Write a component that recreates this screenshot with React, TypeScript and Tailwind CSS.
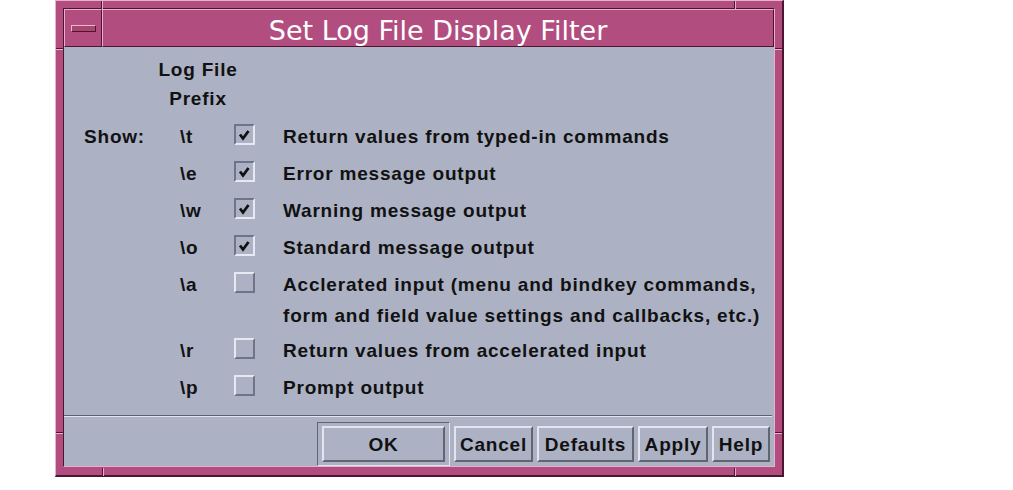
const rows = [
  { prefix: "\\t", on: true, lines: ["Return values from typed-in commands"] },
  { prefix: "\\e", on: true, lines: ["Error message output"] },
  { prefix: "\\w", on: true, lines: ["Warning message output"] },
  { prefix: "\\o", on: true, lines: ["Standard message output"] },
  {
    prefix: "\\a",
    on: false,
    lines: [
      "Acclerated input (menu and bindkey commands,",
      "form and field value settings and callbacks, etc.)",
    ],
  },
  { prefix: "\\r", on: false, lines: ["Return values from accelerated input"] },
  { prefix: "\\p", on: false, lines: ["Prompt output"] },
];

const text = "font-['Liberation_Sans',Arial,sans-serif] font-bold text-[19px] tracking-[0.8px] text-[#111111]";

function CheckBox({ on }: { on: boolean }) {
  return (
    <div
      className={
        "mt-[8px] w-[21px] h-[21px] shrink-0 border-2 flex items-center justify-center " +
        (on
          ? "border-t-[#70748a] border-l-[#70748a] border-b-[#e6e9f2] border-r-[#e6e9f2]"
          : "border-t-[#e6e9f2] border-l-[#e6e9f2] border-b-[#70748a] border-r-[#70748a]")
      }
    >
      {on && (
        <svg width="17" height="17" viewBox="0 0 17 17">
          <polyline points="4,8.5 7,12.5 12.5,5" fill="none" stroke="#111" strokeWidth="2.8" strokeLinejoin="miter" />
        </svg>
      )}
    </div>
  );
}

function Button({ label, w }: { label: string; w: string }) {
  return (
    <div
      className={
        "h-[36px] border-2 border-t-[#e2e5ef] border-l-[#e2e5ef] border-b-[#61656f] border-r-[#61656f] flex items-center justify-center pt-[2px] " +
        w
      }
    >
      <span className={text}>{label}</span>
    </div>
  );
}

// frame resize notches
function Notch({ pos, vertical }: { pos: string; vertical: boolean }) {
  return (
    <div
      className={
        "absolute " +
        pos +
        (vertical
          ? " w-[2px] h-[8px] border-l border-l-[#4d1530] border-r border-r-[#e8b0cc]"
          : " w-[7px] h-[2px] border-t border-t-[#4d1530] border-b border-b-[#e8b0cc]")
      }
    />
  );
}

export default function App() {
  return (
    <div className="w-[1013px] h-[490px] bg-white overflow-hidden">
      <div className="relative ml-[55px] w-[729px] bg-[#b24e7f] border border-t-[#e8b0cc] border-l-[#e8b0cc] border-r-2 border-b-2 border-r-[#4d1530] border-b-[#4d1530] pt-[7px] pl-[7px] pr-[7px] pb-[8px]">
        <Notch vertical pos="left-[45px] top-0" />
        <Notch vertical pos="left-[678px] top-0" />
        <Notch vertical pos="left-[46px] top-[467px]" />
        <Notch vertical pos="left-[678px] top-[467px]" />
        <Notch vertical={false} pos="left-0 top-[47px]" />
        <Notch vertical={false} pos="left-0 top-[431px]" />
        <Notch vertical={false} pos="left-[719px] top-[47px]" />
        <Notch vertical={false} pos="left-[719px] top-[431px]" />

        <div className="border border-t-[#4d1530] border-l-[#4d1530] border-b-[#e8b0cc] border-r-[#e8b0cc] flex flex-col">
          {/* title bar */}
          <div className="h-[38px] flex">
            <div className="w-[38px] border border-t-[#e8b0cc] border-l-[#e8b0cc] border-b-[#4d1530] border-r-[#4d1530] flex items-center justify-center">
              <div className="w-[25px] h-[7px] bg-[#a8466f] border border-t-[#eab6d0] border-l-[#eab6d0] border-b-[#4d1530] border-r-[#4d1530]" />
            </div>
            <div className="flex-1 border border-t-[#e8b0cc] border-l-[#e8b0cc] border-b-[#4d1530] border-r-[#4d1530] pt-[4px] text-center">
              <span className="font-['DejaVu_Sans',sans-serif] text-[27px] leading-[33px] text-white">
                Set Log File Display Filter
              </span>
            </div>
          </div>

          {/* body */}
          <div className="bg-[#acb1c4] h-[419px] flex flex-col">
            <div className="h-[368px] flex flex-col">
              <div className={"ml-[86px] w-[96px] pt-[8px] text-center leading-[29px] " + text}>
                <div>Log File</div>
                <div>Prefix</div>
              </div>
              <div className="mt-[3px] flex flex-col">
                {rows.map((r, i) => (
                  <div
                    key={r.prefix}
                    className={"flex items-start pl-[20px] " + (r.lines.length > 1 ? "h-[66px]" : "h-[37px]")}
                  >
                    <div className={"w-[96px] pt-[2px] leading-[37px] " + text}>{i === 0 ? "Show:" : ""}</div>
                    <div className={"w-[54px] pt-[2px] leading-[37px] " + text}>{r.prefix}</div>
                    <CheckBox on={r.on} />
                    <div className={"ml-[28px] pt-[5px] leading-[31px] whitespace-nowrap " + text}>
                      {r.lines.map((l) => (
                        <div key={l}>{l}</div>
                      ))}
                    </div>
                  </div>
                ))}
              </div>
            </div>

            {/* separator */}
            <div className="mr-[2px] h-[2px] border-t border-t-[#5d6070] border-b border-b-[#e4e6ef]" />

            {/* buttons */}
            <div className="flex justify-end items-center gap-[4px] pr-[4px] pt-[5px]">
              <div className="w-[133px] h-[44px] border border-t-[#61656f] border-l-[#61656f] border-b-[#e2e5ef] border-r-[#e2e5ef] px-[4px] py-[3px]">
                <Button label="OK" w="w-full" />
              </div>
              <Button label="Cancel" w="w-[79px]" />
              <Button label="Defaults" w="w-[97px]" />
              <Button label="Apply" w="w-[70px]" />
              <Button label="Help" w="w-[58px]" />
            </div>
          </div>
        </div>
      </div>
    </div>
  );
}
